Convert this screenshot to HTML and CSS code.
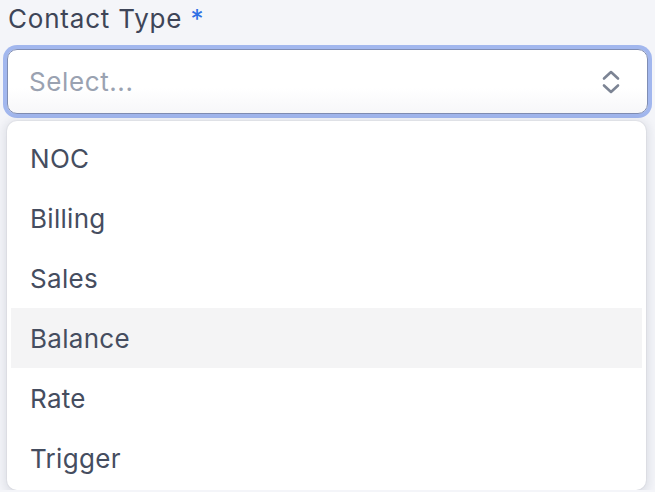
FILE: index.html
```html
<!DOCTYPE html>
<html>
<head>
<meta charset="utf-8">
<link rel="stylesheet" href="styles.css">
</head>
<body>
<div class="field">
  <div class="label">Contact Type <span class="req">*</span></div>
  <div class="select">
    <span class="placeholder">Select...</span>
    <svg class="chev" width="20" height="26" viewBox="0 0 20 26">
      <path d="M3 9.5 L10 3 L17 9.5" fill="none" stroke="#7c8494" stroke-width="2.6" stroke-linecap="round" stroke-linejoin="round"/>
      <path d="M3 16.5 L10 23 L17 16.5" fill="none" stroke="#7c8494" stroke-width="2.6" stroke-linecap="round" stroke-linejoin="round"/>
    </svg>
  </div>
  <div class="menu">
    <div class="item">NOC</div>
    <div class="item">Billing</div>
    <div class="item">Sales</div>
    <div class="item active">Balance</div>
    <div class="item">Rate</div>
    <div class="item">Trigger</div>
  </div>
</div>
</body>
</html>
```

FILE: styles.css
```css
html, body {
  margin: 0;
  padding: 0;
  background: #f4f5f9;
  font-family: Inter, "Noto Sans", sans-serif;
  overflow: hidden;
}
.field {
  padding: 0 3px 0 2px;
  display: flex;
  flex-direction: column;
}
.label {
  font-size: 26px;
  color: #3e4558;
  padding: 3px 0 0 6px;
  height: 39px;
  line-height: 32px;
  letter-spacing: 0.8px;
}
.req {
  color: #2f6fe4;
}
.select {
  box-sizing: border-box;
  margin-top: 7px;
  height: 65px;
  border: 1px solid #7f8db3;
  border-radius: 10px;
  box-shadow: 0 0 0 4px #a2b7ee;
  margin-left: 5px;
  margin-right: 4px;
  background: linear-gradient(#ffffff 60%, #f7f7f9);
  display: flex;
  align-items: center;
  justify-content: space-between;
  padding: 0 26px 0 21px;
}
.placeholder {
  font-size: 26px;
  color: #9aa2b1;
  letter-spacing: 0.6px;
}
.chev {
  display: block;
}
.menu {
  margin: 7px 6px 0 5px;
  background: #fff;
  border-radius: 10px;
  padding: 7px 4px 2px;
  box-shadow: 0 0 0 1px rgba(0,0,0,0.03), 0 2px 10px 3px rgba(30,40,70,0.1);
}
.item {
  height: 60px;
  display: flex;
  align-items: center;
  padding-left: 19px;
  font-size: 26px;
  color: #454d5f;
  letter-spacing: 0.3px;
}
.item.active {
  background: #f4f4f5;
}
```
